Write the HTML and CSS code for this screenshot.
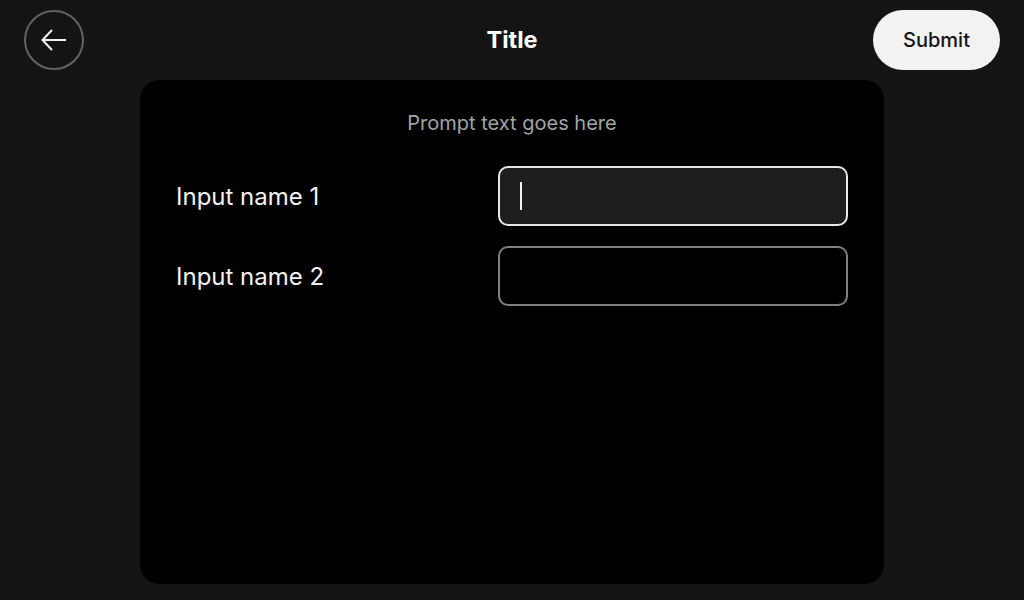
FILE: index.html
```html
<!DOCTYPE html>
<html lang="en">

<head>
    <meta charset="UTF-8">
    <meta name="viewport" content="width=device-width, initial-scale=1.0">
    <title>Title</title>
    <link rel="stylesheet" href="styles.css">
</head>

<body>
    <div class="header">
        <button class="back-btn" type="button">
            <svg width="28" height="28" viewBox="0 0 28 28">
                <path d="M26 14H2.5M12 4L2.5 14L12 24" fill="none" stroke="#f2f2f2" stroke-width="2" />
            </svg>
        </button>
        <div class="title">Title</div>
        <button class="submit-btn" type="button">Submit</button>
    </div>

    <div class="panel">
        <div class="prompt">Prompt text goes here</div>
        <div class="form">
            <label class="label">Input name 1</label>
            <div class="field focused"><span class="caret"></span></div>
            <label class="label">Input name 2</label>
            <div class="field"></div>
        </div>
    </div>
</body>

</html>
```

FILE: styles.css
```css
* {
    padding: 0;
    margin: 0;
    box-sizing: border-box;
}

body {
    width: 1024px;
    height: 600px;
    background: #141414;
    color: #ffffff;
    font-family: Inter, "Liberation Sans", sans-serif;
    overflow: hidden;
}

.header {
    height: 70px;
    padding: 10px 24px 0 24px;
    display: flex;
    justify-content: space-between;
    align-items: center;
    position: relative;
}

.back-btn {
    width: 60px;
    height: 60px;
    border-radius: 50%;
    border: 2px solid #626262;
    background: transparent;
    display: flex;
    justify-content: center;
    align-items: center;
}

.title {
    position: absolute;
    left: 0;
    right: 0;
    top: 10px;
    height: 60px;
    line-height: 60px;
    text-align: center;
    font-size: 23.5px;
    font-weight: 700;
    pointer-events: none;
}

.submit-btn {
    width: 127px;
    height: 60px;
    border-radius: 30px;
    border: none;
    background: #f2f2f2;
    color: #141414;
    font-family: Inter, "Liberation Sans", sans-serif;
    font-size: 20px;
    font-weight: 500;
}

.panel {
    width: 744px;
    height: 504px;
    margin: 10px auto 0 auto;
    background: #000000;
    border-radius: 20px;
    padding: 32px 36px;
}

.prompt {
    text-align: center;
    color: #a3a3a3;
    font-size: 20px;
    line-height: 22px;
}

.form {
    margin-top: 32px;
    display: grid;
    grid-template-columns: 1fr 350px;
    row-gap: 20px;
    align-items: center;
}

.label {
    font-size: 24px;
    color: #f2f2f2;
}

.field {
    height: 60px;
    border: 2px solid #808080;
    border-radius: 10px;
    display: flex;
    align-items: center;
    padding-left: 20px;
}

.field.focused {
    border-color: #e8e8e8;
    background: #1e1e1e;
}

.caret {
    width: 2px;
    height: 28px;
    background: #f2f2f2;
}
```
